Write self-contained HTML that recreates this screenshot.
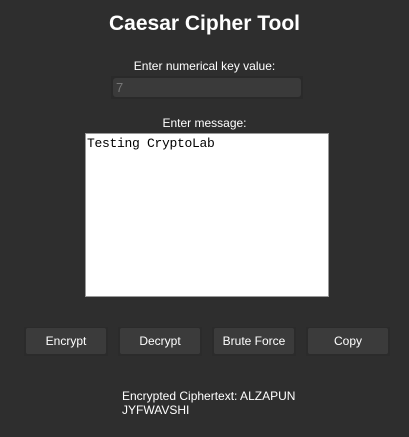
<!DOCTYPE html>
<html><head><style>
body{margin:0;width:409px;height:437px;background:#2e2e2e;position:relative;overflow:hidden;font-family:"Liberation Sans",sans-serif;color:#fff}
.a{position:absolute}
.t{left:0;width:409px;text-align:center;top:12px;font-size:21px;font-weight:bold}
.l{left:0;width:409px;text-align:center;font-size:12px}
.e{left:111px;top:76px;width:192px;height:23px;background:#2a2a2a}
.e div{position:absolute;left:2px;top:2px;right:2px;bottom:2px;background:#3a3a3a;border-radius:3px;color:#777;font-size:13px;line-height:19px;padding-left:3px}
.ta{left:85px;top:133px;background:#fff;border:1px solid #999;color:#000;font-family:"Liberation Mono",monospace;font-size:13px;line-height:16px;padding:2px 0 0 1px;box-sizing:border-box;width:244px;height:164px;letter-spacing:-0.3px}
.b{top:327px;width:84px;height:29px;background:#2b2b2b}
.b div{position:absolute;left:2px;top:1px;right:2px;bottom:2px;background:#3b3b3b;border-radius:2px;text-align:center;font-size:12px;line-height:27px}
.o{left:122px;top:389px;font-size:12px;line-height:14px}
</style></head><body>
<div class="a t">Caesar Cipher Tool</div>
<div class="a l" style="top:59px">Enter numerical key value:</div>
<div class="a e"><div>7</div></div>
<div class="a l" style="top:116px">Enter message:</div>
<div class="a ta">Testing CryptoLab</div>
<div class="a b" style="left:24px"><div>Encrypt</div></div>
<div class="a b" style="left:118px"><div>Decrypt</div></div>
<div class="a b" style="left:212px"><div>Brute Force</div></div>
<div class="a b" style="left:306px"><div>Copy</div></div>
<div class="a o">Encrypted Ciphertext: ALZAPUN<br>JYFWAVSHI</div>
</body></html>
